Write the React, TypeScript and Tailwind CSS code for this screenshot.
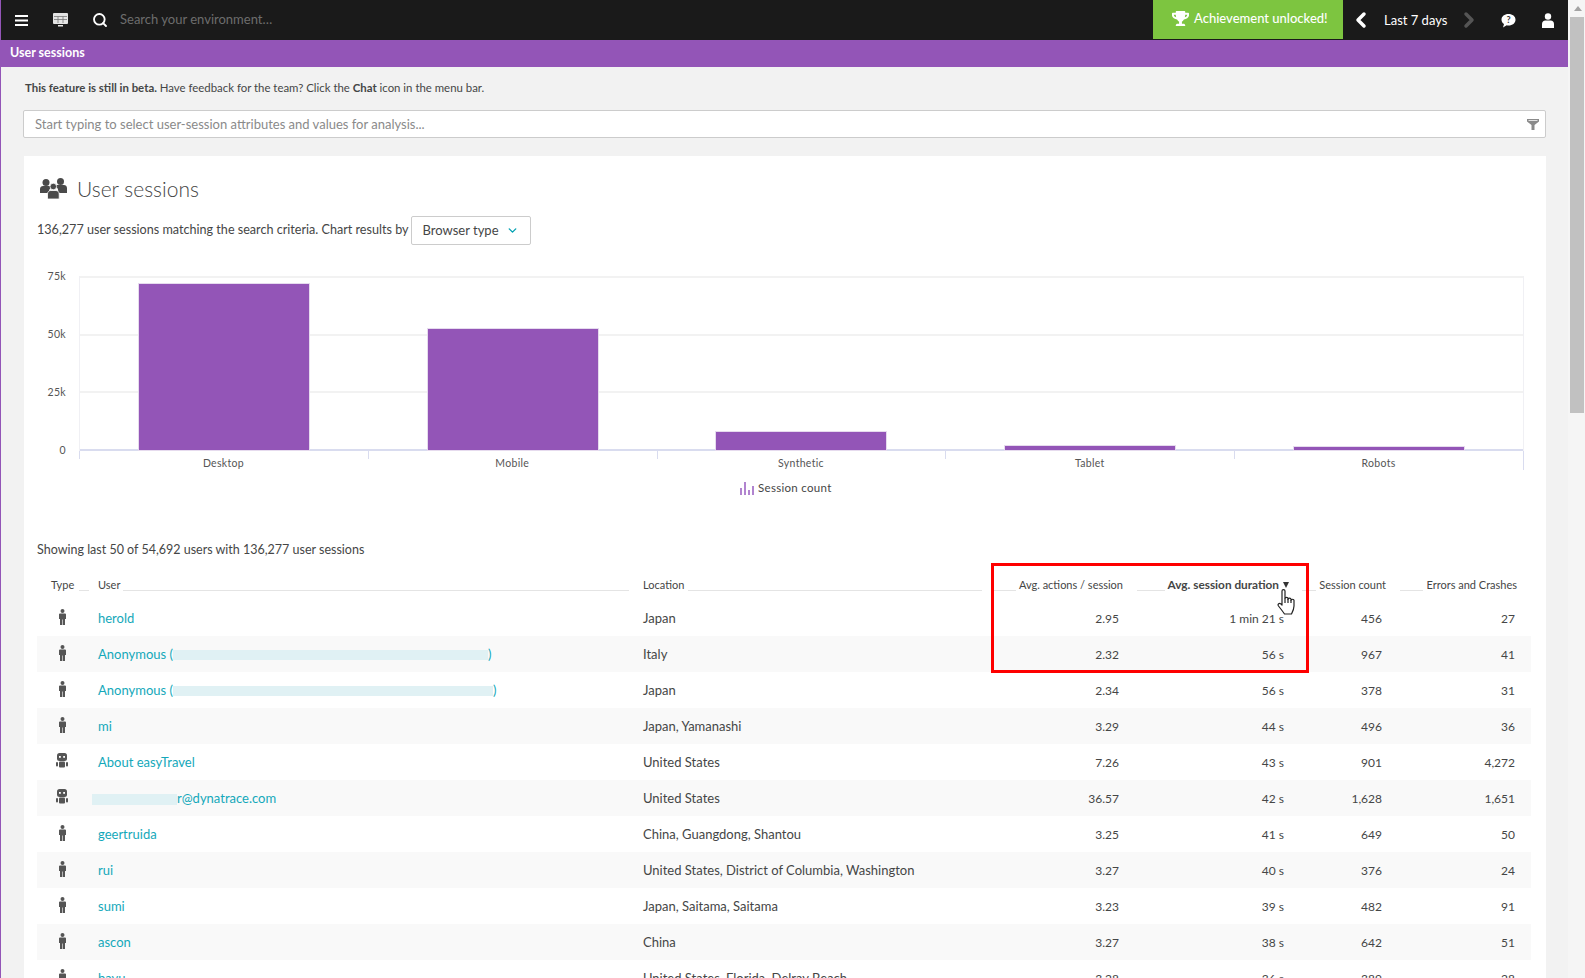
import React from 'react';
import { ChevronDown, ChevronLeft, ChevronRight, Search } from 'lucide-react';
import { FaTrophy } from 'react-icons/fa';

const bars = [
  { label: 'Desktop', value: 71500 },
  { label: 'Mobile', value: 52200 },
  { label: 'Synthetic', value: 7800 },
  { label: 'Tablet', value: 1800 },
  { label: 'Robots', value: 1300 },
];

const rows = [
  { type: 'user', name: 'herold', location: 'Japan', actions: '2.95', duration: '1 min 21 s', count: '456', errors: '27' },
  { type: 'user', name: 'anon1', location: 'Italy', actions: '2.32', duration: '56 s', count: '967', errors: '41' },
  { type: 'user', name: 'anon2', location: 'Japan', actions: '2.34', duration: '56 s', count: '378', errors: '31' },
  { type: 'user', name: 'mi', location: 'Japan, Yamanashi', actions: '3.29', duration: '44 s', count: '496', errors: '36' },
  { type: 'robot', name: 'About easyTravel', location: 'United States', actions: '7.26', duration: '43 s', count: '901', errors: '4,272' },
  { type: 'robot', name: 'email', location: 'United States', actions: '36.57', duration: '42 s', count: '1,628', errors: '1,651' },
  { type: 'user', name: 'geertruida', location: 'China, Guangdong, Shantou', actions: '3.25', duration: '41 s', count: '649', errors: '50' },
  { type: 'user', name: 'rui', location: 'United States, District of Columbia, Washington', actions: '3.27', duration: '40 s', count: '376', errors: '24' },
  { type: 'user', name: 'sumi', location: 'Japan, Saitama, Saitama', actions: '3.23', duration: '39 s', count: '482', errors: '91' },
  { type: 'user', name: 'ascon', location: 'China', actions: '3.27', duration: '38 s', count: '642', errors: '51' },
  { type: 'user', name: 'bayu', location: 'United States, Florida, Delray Beach', actions: '3.28', duration: '36 s', count: '389', errors: '28' },
];

const gridCols = 'grid grid-cols-[56px_540px_353px_141px_166px_97px_141px]';

function PersonIcon() {
  return (
    <svg width="9" height="16" viewBox="0 0 9 16" fill="#555">
      <circle cx="4.5" cy="2" r="2" />
      <path d="M1 5.500C1 4.700 1.600 4.400 2.200 4.400h4.600c.6 0 1.200.3 1.200 1.100V10H7v6H4.800v-5.500h-.6V16H2V10H1Z" />
    </svg>
  );
}

function RobotIcon() {
  return (
    <svg width="14" height="15" viewBox="0 0 14 15" fill="#555">
      <rect x="2" y="0" width="10" height="8" rx="2.500" />
      <rect x="4" y="3" width="1.800" height="1.800" fill="#fff" />
      <rect x="8.200" y="3" width="1.800" height="1.800" fill="#fff" />
      <rect x="4" y="8.500" width="6" height="6" rx="1" />
      <rect x="1" y="9" width="2" height="4.500" rx="1" />
      <rect x="11" y="9" width="2" height="4.500" rx="1" />
    </svg>
  );
}

function UsersIcon() {
  return (
    <svg width="27" height="21" viewBox="0 0 27 21" fill="#4a4a4a" className="mt-[-4px]">
      <circle cx="6" cy="4.500" r="3.500" />
      <circle cx="20.500" cy="3.500" r="3.500" />
      <path d="M0 15v-4c0-2 1.500-3 3-3h6c1.200 0 2 .6 2.500 1.500-1.500.8-2.500 2-2.500 3.500v2Z" />
      <path d="M27 15v-5c0-2-1.500-3-3-3h-6.500c-1 0-1.800.6-2.300 1.500 1.800.8 3 2 3 4v2.500Z" />
      <circle cx="13.300" cy="8.500" r="3.300" stroke="#fff" strokeWidth=".8" />
      <path d="M7.500 21v-5c0-2 1.500-3.500 3.200-3.500h5.300c1.700 0 3.200 1.500 3.200 3.500v5Z" stroke="#fff" strokeWidth=".8" />
    </svg>
  );
}

function HandCursor() {
  return (
    <svg width="20" height="26" viewBox="0 0 20 26" fill="#fff" stroke="#222" strokeWidth="1.200" strokeLinejoin="round" className="absolute left-[1240px] top-[19px]">
      <path d="M5 2c0-1.800 3-1.800 3 0v7.500c0-1.500 3-1.500 3 0v.8c0-1.500 3-1.500 3 0v.9c0-1.300 3-1.300 3 0V17c0 3-1 5-2.500 8H7.500C5.500 22 3.500 19.500 1.500 17c-1.300-1.800 1-3.500 2.200-2.200L5 16Z" />
      <path d="M8 9.500V14M11 10v4M14 11v3" fill="none" />
    </svg>
  );
}

function TopBar() {
  return (
    <div className="flex h-10 items-center bg-[#1a1a1a] text-white">
      <svg width="13" height="11" viewBox="0 0 13 11" fill="#fff" className="ml-[14px]">
        <rect width="13" height="2" />
        <rect y="4.500" width="13" height="2" />
        <rect y="9" width="13" height="2" />
      </svg>
      <svg width="15" height="14" viewBox="0 0 15 14" className="ml-[25px]">
        <rect width="15" height="11" rx="1" fill="#e4e4e4" />
        <path d="M1 3.500h13M1 6.500h13M5 3.500V10M10 3.500V10" stroke="#777" strokeWidth=".8" />
        <rect x="5" y="12" width="5" height="1.500" fill="#e4e4e4" />
      </svg>
      <Search size={16} strokeWidth={2.800} className="ml-[24px]" />
      <span className="ml-[12px] text-[13px] text-[#6d6d6d]">Search your environment…</span>
      <div className="ml-auto flex h-[39px] w-[190px] items-center self-start bg-[#7dc540] pb-[2px] pl-[19px] text-[13px]">
        <FaTrophy size={17} />
        <span className="ml-[5px] font-medium">Achievement unlocked!</span>
      </div>
      <div className="flex w-[225px] items-center">
        <ChevronLeft size={24} strokeWidth={3.500} className="ml-[6px]" />
        <span className="ml-[11px] mt-[2px] w-[73px] text-[13px]">Last 7 days</span>
        <ChevronRight size={24} strokeWidth={3.500} className="text-[#555]" />
        <svg width="15" height="15" viewBox="0 0 15 15" className="ml-[20px]">
          <path d="M7.500 1C11.500 1 14.500 3.300 14.500 6.700S11.500 12.500 7.500 12.500c-.7 0-1.200 0-1.800-.2L2 14.500l1-3.500C1.500 10 .5 8.500.5 6.700.5 3.300 3.500 1 7.500 1Z" fill="#fff" />
          <text x="7.500" y="10" textAnchor="middle" fontSize="9" fontWeight="700" fill="#333">?</text>
        </svg>
        <svg width="12" height="15" viewBox="0 0 12 15" fill="#fff" className="ml-[26px]">
          <circle cx="6" cy="3.500" r="3.200" />
          <path d="M0 15v-4c0-2 1.500-3.500 3.200-3.500h5.600C10.500 7.500 12 9 12 11v4Z" />
        </svg>
      </div>
    </div>
  );
}

function Chart() {
  return (
    <div className="mt-[31px]">
      <div className="flex">
        <div className="my-[-7px] flex h-[188px] w-[42px] flex-col justify-between pr-[13px] text-right text-[10.500px] leading-[14px] tracking-[0.3px] text-[#555]">
          <span>75k</span>
          <span>50k</span>
          <span>25k</span>
          <span>0</span>
        </div>
        <div className="relative h-[175px] w-[1445px] border-x border-[#f0f0f4]">
          <div className="absolute inset-0 flex flex-col justify-between">
            <div className="h-[2px] bg-[#f2f2f2]" />
            <div className="h-[2px] bg-[#f2f2f2]" />
            <div className="h-[2px] bg-[#f2f2f2]" />
            <div className="h-[2px] bg-[#d9dcef]" />
          </div>
          <div className="relative flex h-full">
            {bars.map((bar) => (
              <div key={bar.label} className="flex flex-1 items-end justify-center">
                <div className="mb-[1px] w-[170px] bg-[#9355b7] outline outline-1 outline-[#e6dbee]" style={{ height: (bar.value / 75000) * 174 }} />
              </div>
            ))}
          </div>
        </div>
      </div>
      <div className="ml-[42px] flex w-[1445px] border-r border-[#d9dcef]">
        {bars.map((bar) => (
          <div key={bar.label} className="flex-1">
            <div className="h-2 w-px bg-[#d9dcef]" />
            <div className="mt-[-3px] text-center text-[10.500px] leading-[14px] tracking-[0.3px] text-[#555]">{bar.label}</div>
          </div>
        ))}
      </div>
      <div className="ml-[703px] mt-[11px] flex h-[14px] items-center">
        <svg width="14" height="13" viewBox="0 0 14 13" fill="#b184cf">
          <rect x="0" y="6" width="2" height="7" />
          <rect x="4" y="0" width="2" height="13" />
          <rect x="8" y="8" width="2" height="5" />
          <rect x="12" y="4" width="2" height="9" />
        </svg>
        <span className="ml-[4px] text-[11.500px] tracking-[0.3px] text-[#454646]">Session count</span>
      </div>
    </div>
  );
}

function UserName({ name }: { name: string }) {
  if (name === 'anon1' || name === 'anon2') {
    return (
      <span className="flex items-center">
        <span className="w-[75px] whitespace-nowrap">Anonymous (</span>
        <span className={`inline-block h-[10px] bg-[#e0f1f4] ${name === 'anon1' ? 'w-[315px]' : 'w-[320px]'}`} />)
      </span>
    );
  }
  if (name === 'email') {
    return (
      <span className="flex items-center">
        <span className="ml-[-6px] inline-block h-[11px] w-[85px] bg-[#e0f1f4]" />
        r@dynatrace.com
      </span>
    );
  }
  return <span>{name}</span>;
}

function SessionsTable() {
  return (
    <div className="relative mt-[13px] w-[1494px]">
      <div className={`${gridCols} h-[30px] items-center text-[11px] text-[#454646]`}>
        <div className="flex items-center pl-[14px] pr-[4px]">
          Type<div className="ml-[5px] mt-[10px] h-px flex-1 bg-[#e4e4e4]" />
        </div>
        <div className="flex items-center pl-[5px] pr-[4px]">
          User<div className="ml-[3px] mt-[10px] h-px flex-1 bg-[#e4e4e4]" />
        </div>
        <div className="flex items-center pl-[10px] pr-[4px]">
          Location<div className="ml-[4px] mt-[10px] h-px flex-1 bg-[#e4e4e4]" />
        </div>
        <div className="flex items-center pl-[8px] pr-[4px]">
          <div className="mr-[3px] mt-[10px] h-px flex-1 bg-[#e4e4e4]" />Avg. actions / session
        </div>
        <div className="flex items-center pl-[10px] pr-[4px]">
          <div className="mr-[3px] mt-[10px] h-px flex-1 bg-[#e4e4e4]" />
          <span className="text-[11.800px] font-bold">Avg. session duration</span>
          <span className="ml-[4px] h-0 w-0 border-x-[3.5px] border-t-[6px] border-x-transparent border-t-[#333]" />
        </div>
        <div className="flex items-center pl-[9px] pr-[4px]">
          <div className="mr-[3px] mt-[10px] h-px flex-1 bg-[#e4e4e4]" />Session count
        </div>
        <div className="flex items-center pl-[10px] pr-[14px]">
          <div className="mr-[3px] mt-[10px] h-px flex-1 bg-[#e4e4e4]" />Errors and Crashes
        </div>
      </div>
      {rows.map((row, i) => (
        <div key={row.name} className={`${gridCols} h-9 items-center pt-[2px] text-[13px] text-[#454646] ${i % 2 === 1 ? 'bg-[#f9f9f9]' : ''}`}>
          <div className="flex w-[50px] justify-center pb-[5px]">{row.type === 'user' ? <PersonIcon /> : <RobotIcon />}</div>
          <div className="pl-[5px] text-[#14a8ba]">
            <UserName name={row.name} />
          </div>
          <div className="pl-[10px]">{row.location}</div>
          <div className="pr-[8px] text-right text-[12px]">{row.actions}</div>
          <div className="pr-[9px] text-right text-[12px]">{row.duration}</div>
          <div className="pr-[8px] text-right text-[12px]">{row.count}</div>
          <div className="pr-[16px] text-right text-[12px]">{row.errors}</div>
        </div>
      ))}
      {/* annotation from the screenshot */}
      <div className="absolute left-[954px] top-[-7px] h-[110px] w-[318px] border-[3px] border-[#fe0000]" />
      <HandCursor />
    </div>
  );
}

export default function App() {
  return (
    <div className="flex h-[978px] w-full overflow-hidden bg-white font-['Lato',sans-serif]">
      <div className="w-[1568px] shrink-0 overflow-hidden border-l border-[#9355b7] bg-[#f2f2f2]">
        <TopBar />
        <div className="flex h-[27px] items-center bg-[#9355b7] pb-[1px] pl-[9px] text-[12.500px] font-bold text-white">User sessions</div>
        <div className="pl-[22px] pr-[22px]">
          <p className="pl-[2px] pt-[13px] text-[11.400px] leading-[16px] text-[#454646]">
            <b>This feature is still in beta.</b> Have feedback for the team? Click the <b>Chat</b> icon in the menu bar.
          </p>
          <div className="mt-[14px] flex h-[28px] items-center justify-between rounded-[2px] border border-[#ccc] bg-white pl-[11px] pr-[6px] pt-[1px] text-[13px] text-[#8a8a8a]">
            Start typing to select user-session attributes and values for analysis...
            <svg width="12" height="11" viewBox="0 0 12 11" fill="#8a8a8a">
              <path d="M0 0h12v2.500L7.500 6v5h-3V6L0 2.500ZM1.500 1v.7h9V1Z" />
            </svg>
          </div>
          <div className="ml-px mt-[18px] h-[900px] bg-white pl-[13px] pt-[20px]">
            <div className="flex h-[28px] items-center pl-[3px]">
              <UsersIcon />
              <span className="mb-[2px] ml-[10px] text-[21px] font-light text-[#454646]">User sessions</span>
            </div>
            <div className="mt-[12px] flex h-[29px] items-center text-[12.600px] text-[#454646]">
              136,277 user sessions matching the search criteria. Chart results by
              <div className="ml-[2px] flex h-[29px] w-[120px] items-center justify-between rounded-[2px] border border-[#ccc] pl-[11px] pr-[11px] text-[13px]">
                Browser type
                <ChevronDown size={13} strokeWidth={2.500} className="text-[#00a1b2]" />
              </div>
            </div>
            <Chart />
            <div className="mt-[48px] h-[14px] text-[12.500px] leading-[14px] text-[#454646]">Showing last 50 of 54,692 users with 136,277 user sessions</div>
            <SessionsTable />
          </div>
        </div>
      </div>
      <div className="flex-1 bg-[#f5f5f5] pl-[2px]">
        <div className="flex h-[17px] items-center justify-center">
          <div className="h-0 w-0 border-x-[4px] border-b-[5px] border-x-transparent border-b-[#a3a3a3]" />
        </div>
        <div className="h-[396px] w-[14px] bg-[#c1c1c1]" />
      </div>
    </div>
  );
}
